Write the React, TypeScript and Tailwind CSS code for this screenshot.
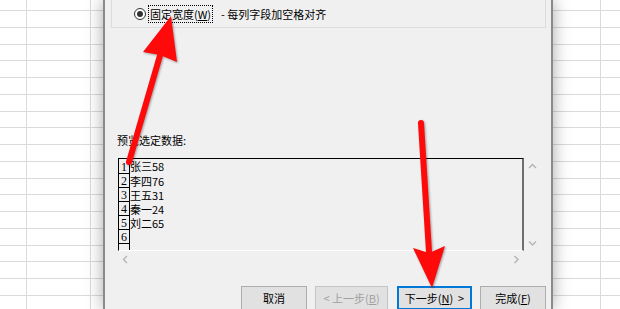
import React from "react";

const FONT = { fontFamily: '"Noto Sans CJK SC", "Noto Sans", sans-serif' };

const lines = Array.from({ length: 19 }, (_, k) => Math.round(10 + 16.75 * k));
const heights = lines.map((l, k) => (k === 0 ? 11 : l - lines[k - 1]));

function hClass(h: number) {
  if (h === 11) return "h-[11px]";
  if (h === 16) return "h-[16px]";
  return "h-[17px]";
}

function LeftGrid() {
  return (
    <div className="w-[103px] shrink-0 flex flex-col bg-white">
      {heights.map((h, i) => (
        <div key={i} className={`${hClass(h)} shrink-0 flex border-b border-[#dadada]`}>
          <div className="w-[27px] border-r border-[#dadada]" />
          <div className="w-[64px] border-r border-[#dadada]" />
          <div className="flex-1" />
        </div>
      ))}
    </div>
  );
}

function RightGrid() {
  return (
    <div className="flex-1 flex flex-col bg-white">
      {heights.map((h, i) => (
        <div key={i} className={`${hClass(h)} shrink-0 flex border-b border-[#dadada]`}>
          <div className="w-[48px] border-r border-[#dadada]" />
          <div className="flex-1" />
        </div>
      ))}
    </div>
  );
}

function Chevron({ dir }: { dir: "up" | "down" | "left" | "right" }) {
  const pts =
    dir === "up"
      ? "1,5 4.5,1.5 8,5"
      : dir === "down"
      ? "1,1.5 4.5,5 8,1.5"
      : dir === "left"
      ? "5,1 1.5,4.5 5,8"
      : "1.5,1 5,4.5 1.5,8";
  const size = dir === "up" || dir === "down" ? { w: 9, h: 7 } : { w: 7, h: 9 };
  return (
    <svg width={size.w} height={size.h} viewBox={`0 0 ${size.w} ${size.h}`}>
      <polyline points={pts} fill="none" stroke="#b4b4b4" strokeWidth="1.4" />
    </svg>
  );
}

const rows = ["张三58", "李四76", "王五31", "秦一24", "刘二65", "", ""];

function Btn({
  children,
  w,
  variant = "normal",
}: {
  children: React.ReactNode;
  w: string;
  variant?: "normal" | "disabled" | "default";
}) {
  const cls =
    variant === "default"
      ? "border-2 border-[#0078d7] text-[#000]"
      : variant === "disabled"
      ? "border border-[#c4c4c4] text-[#a0a0a0]"
      : "border border-[#adadad] text-[#000]";
  return (
    <div
      className={`${w} h-[24px] shrink-0 bg-[#e1e1e1] ${cls} flex items-center justify-center text-[11px] leading-none pt-[1px]`}
    >
      {children}
    </div>
  );
}

function Dialog() {
  return (
    <div
      className="w-[450px] shrink-0 bg-[#f0f0f0] border-l-2 border-r-2 border-[#8a8a8a] shadow-[0_0_16px_rgba(0,0,0,0.35)] z-10 flex flex-col pl-[6px] pr-[5px] text-[#000]"
      style={FONT}
    >
      {/* group box */}
      <div className="mt-[-20px] h-[48px] shrink-0 border border-[#dcdcdc] pl-[22px] pt-[24px] flex items-start">
        <div className="flex items-center h-[18px]">
          <div className="w-[12px] h-[12px] rounded-full border border-[#333] bg-white flex items-center justify-center">
            <div className="w-[6px] h-[6px] rounded-full bg-[#333]" />
          </div>
          <div className="ml-[2px] h-[18px] w-[65px] border border-dotted border-[#000] flex items-center justify-center text-[11px] leading-none">
            固定宽度(<span className="underline">W</span>)
          </div>
          <div className="ml-[8px] text-[11px] leading-none">- 每列字段加空格对齐</div>
        </div>
      </div>

      <div className="mt-[105px] ml-[6px] h-[14px] text-[11px] leading-[14px]">预览选定数据:</div>

      <div className="mt-[11px] ml-[7px] flex">
        <div className="flex flex-col">
          <div className="w-[406px] h-[93px] border-t border-l border-t-black border-l-black border-r-2 border-r-[#6e6e6e] border-b border-b-white overflow-hidden flex flex-col bg-[#f0f0f0]">
            {rows.map((r, i) => (
              <div key={i} className={`${i === 0 ? "h-[15px]" : "h-[14px]"} shrink-0 flex`}>
                <div
                  className="w-[11px] shrink-0 border-r border-b border-black flex items-end pl-[2px] text-[12px] leading-[12px]"
                  style={{ fontFamily: '"Liberation Serif", serif' }}
                >
                  {i < 6 ? i + 1 : ""}
                </div>
                <div className="flex items-center text-[11px] leading-none">{r}</div>
              </div>
            ))}
          </div>
          <div className="h-[17px] flex items-center justify-between pl-[4px] pr-[4px]">
            <Chevron dir="left" />
            <Chevron dir="right" />
          </div>
        </div>
        <div className="w-[17px] h-[93px] flex flex-col items-center justify-between pt-[5px] pb-[4px]">
          <Chevron dir="up" />
          <Chevron dir="down" />
        </div>
      </div>

      <div className="mt-[18px] flex justify-end">
        <Btn w="w-[66px]">取消</Btn>
        <div className="w-[8px]" />
        <Btn w="w-[73px]" variant="disabled">
          &lt; 上一步(<span className="underline">B</span>)
        </Btn>
        <div className="w-[9px]" />
        <Btn w="w-[75px]" variant="default">
          下一步(<span className="underline">N</span>)&nbsp;&nbsp;&gt;
        </Btn>
        <div className="w-[8px]" />
        <Btn w="w-[66px]">
          完成(<span className="underline">F</span>)
        </Btn>
      </div>
    </div>
  );
}

function Arrows() {
  return (
    <svg
      className="absolute inset-0 z-20 pointer-events-none drop-shadow-[1px_1px_1px_rgba(0,0,0,0.35)]"
      width="620"
      height="309"
      viewBox="0 0 620 309"
    >
      <line x1="129" y1="162" x2="161" y2="52" stroke="#ff0a0a" strokeWidth="6" strokeLinecap="round" />
      <polygon points="171,16 177,62 160,55 143,52" fill="#ff0a0a" />
      <line x1="421" y1="123" x2="429" y2="252" stroke="#ff0a0a" strokeWidth="6" strokeLinecap="round" />
      <polygon points="432,288 413,248 429,253 445,246" fill="#ff0a0a" />
    </svg>
  );
}

export default function App() {
  return (
    <div className="w-[620px] h-[309px] relative overflow-hidden flex bg-white">
      <LeftGrid />
      <Dialog />
      <RightGrid />
      <Arrows />
    </div>
  );
}
